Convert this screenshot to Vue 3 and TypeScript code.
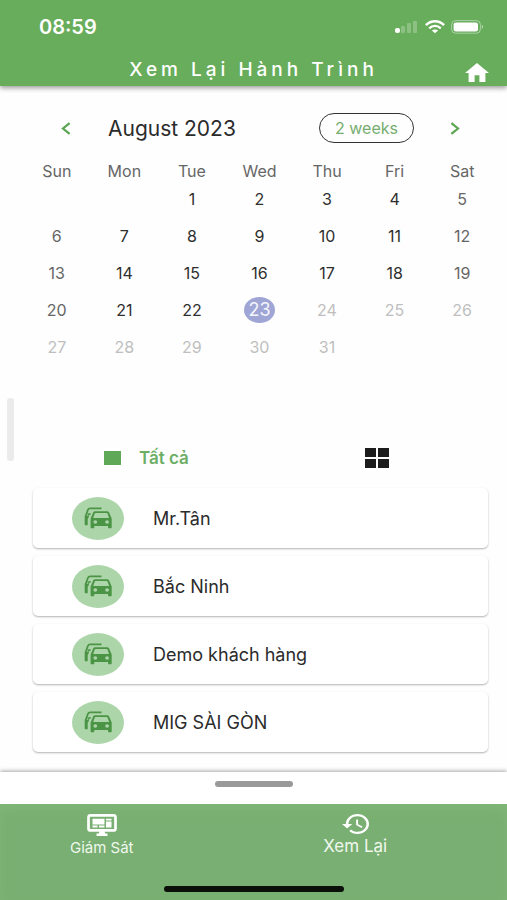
<script setup lang="ts">
import { computed, ref } from 'vue'

interface Day {
  date: number
  weekend: boolean
  disabled: boolean
}

const weekdays: string[] = ['Sun', 'Mon', 'Tue', 'Wed', 'Thu', 'Fri', 'Sat']
const firstWeekday = 2
const daysInMonth = 31
const today = 23
const selected = ref<number>(today)

const weeks = computed<(Day | null)[][]>(() => {
  const rows: (Day | null)[][] = []
  for (let start = 1 - firstWeekday; start <= daysInMonth; start += 7) {
    rows.push(
      Array.from({ length: 7 }, (_, i) => {
        const date = start + i
        if (date < 1 || date > daysInMonth) return null
        return { date, weekend: i === 0 || i === 6, disabled: date > today }
      }),
    )
  }
  return rows
})

const groups: string[] = ['Mr.Tân', 'Bắc Ninh', 'Demo khách hàng', 'MIG SÀI GÒN']
</script>

<template>
  <div class="screen">
    <header class="app-bar">
      <div class="status">
        <span class="clock">08:59</span>
        <div class="indicators">
          <svg width="24" height="14" viewBox="0 0 24 14" aria-hidden="true">
            <rect x="0" y="8" width="5" height="5" rx="2" fill="#fff" />
            <g fill="#fff" opacity="0.25">
              <rect x="6" y="6" width="4" height="7" rx="1" />
              <rect x="12" y="3" width="4" height="10" rx="1" />
              <rect x="18" y="1" width="4" height="12" rx="1" />
            </g>
          </svg>
          <svg width="20" height="14" viewBox="0 0 20 14" fill="none" stroke="#fff" aria-hidden="true">
            <path d="M.9 5.2C6-.1 14-.1 19.1 5.2" stroke-width="2.4" />
            <path d="M4.2 8.3c3.3-3.2 8.3-3.2 11.6 0" stroke-width="2.3" />
            <path d="M10 13.3 6.9 10.6c1.8-1.5 4.4-1.5 6.2 0z" fill="#fff" stroke="none" />
          </svg>
          <svg width="33" height="14" viewBox="0 0 33 14" aria-hidden="true">
            <rect x=".6" y=".6" width="28.8" height="12.6" rx="4" fill="none" stroke="#fff" stroke-opacity=".45" />
            <rect x="2.6" y="2.4" width="24.4" height="9" rx="2.2" fill="#fff" />
            <path d="M30.8 4.8c1.8.7 1.8 3.5 0 4.2z" fill="#fff" fill-opacity=".5" />
          </svg>
        </div>
      </div>
      <div class="title-row">
        <h1 class="title">Xem Lại Hành Trình</h1>
        <button class="icon-button" type="button" aria-label="Home">
          <svg width="24" height="19" viewBox="2 3 20 17" preserveAspectRatio="none" aria-hidden="true">
            <path d="M10 20v-6h4v6h5v-8h3L12 3 2 12h3v8z" fill="#fff" />
          </svg>
        </button>
      </div>
    </header>

    <main class="content">
      <div class="drawer-handle"></div>
      <section class="calendar">
        <div class="calendar-head">
          <button class="chevron" type="button" aria-label="Previous month">
            <svg width="10" height="13" viewBox="0 0 10 13" aria-hidden="true">
              <path d="M8.6 1.2 2 6.5l6.6 5.3" fill="none" stroke="#5aa552" stroke-width="2.2" />
            </svg>
          </button>
          <h2 class="month">August 2023</h2>
          <button class="format" type="button">2 weeks</button>
          <button class="chevron" type="button" aria-label="Next month">
            <svg width="10" height="13" viewBox="0 0 10 13" aria-hidden="true">
              <path d="M1.4 1.2 8 6.5l-6.6 5.3" fill="none" stroke="#5aa552" stroke-width="2.2" />
            </svg>
          </button>
        </div>
        <table class="month-grid">
          <thead>
            <tr>
              <th v-for="name in weekdays" :key="name" scope="col">{{ name }}</th>
            </tr>
          </thead>
          <tbody>
            <tr v-for="(week, w) in weeks" :key="w">
              <td v-for="(day, d) in week" :key="d">
                <button
                  v-if="day"
                  type="button"
                  class="day"
                  :class="{ weekend: day.weekend, disabled: day.disabled, selected: day.date === selected }"
                  :disabled="day.disabled"
                  @click="selected = day.date"
                >{{ day.date }}</button>
              </td>
            </tr>
          </tbody>
        </table>
      </section>

      <div class="filters">
        <button class="filter" type="button">
          <span class="swatch"></span>
          <span>Tất cả</span>
        </button>
        <button class="filter" type="button" aria-label="Grid">
          <svg width="24" height="20" viewBox="0 0 24 20" fill="#1c1c1c" aria-hidden="true">
            <rect width="11" height="9" />
            <rect x="13" width="11" height="9" />
            <rect y="11" width="11" height="9" />
            <rect x="13" y="11" width="11" height="9" />
          </svg>
        </button>
      </div>

      <ul class="groups">
        <li v-for="name in groups" :key="name">
          <button class="group" type="button">
            <span class="avatar">
              <svg width="28" height="22" viewBox="0 0 28 22" fill="#4b9446" aria-hidden="true">
                <path d="M17.500 1.400H6.200C4.700 1.400 4.200 2 3.800 3.100L1.600 9.400" fill="none" stroke="#4b9446" stroke-width="1.700" />
                <path d="M.7 8.800H4l1.200-2V8L4.600 10.600 3.700 12v6.200H1.700c-.6 0-1-.4-1-1zM3.600 6.200h3.200v1.600H3.600z" />
                <path
                  fill-rule="evenodd"
                  d="M25.200 5.700C24.900 4.700 24.100 4.200 23.100 4.200H11.200C10.200 4.200 9.400 4.700 9.100 5.700L6.600 11.600V20.200c0 .6.4 1 1 1h1.700c.6 0 1-.4 1-1V19H24.100v1.200c0 .6.4 1 1 1h1.600c.6 0 1-.4 1-1V11.600zM11.500 5.900h11.300c.4 0 .6.200.7.500L25.100 11H9.200l1.600-4.600C10.900 6.100 11.100 5.900 11.500 5.900zM11.300 16.700a1.900 1.700 0 1 1 0-3.400 1.900 1.700 0 0 1 0 3.400zM23.100 16.700a1.900 1.700 0 1 1 0-3.400 1.900 1.700 0 0 1 0 3.400z"
                />
              </svg>
            </span>
            <span>{{ name }}</span>
          </button>
        </li>
      </ul>
    </main>

    <div class="sheet"><span class="grip"></span></div>

    <nav class="tabs">
      <a class="tab" href="#monitor">
        <svg width="30" height="22" viewBox="0 0 30 22" aria-hidden="true">
          <rect x="1.500" y="1.400" width="27" height="15" rx="2" fill="none" stroke="#fff" stroke-width="2.700" />
          <path d="M12.500 17h5l.7 2.500h2.300V22H9.500v-2.500h2.300z" fill="#fff" />
          <path d="M5.500 4.800h12v5.700h-12zM19 4.800h5.500v1.600H19zM19 7.400h5.500v6.100H19zM5.500 11.600h5v1.900h-5zM12 11.600h5.500v1.900H12z" fill="#fff" />
        </svg>
        <span class="tab-label">Giám Sát</span>
      </a>
      <a class="tab current" href="#replay">
        <svg width="27" height="20" viewBox="1 3 21 18" preserveAspectRatio="none" aria-hidden="true">
          <path
            fill="#fff"
            d="M13 3c-4.970 0-9 4.030-9 9H1l3.890 3.890.07.14L9 12H6c0-3.870 3.130-7 7-7s7 3.130 7 7-3.130 7-7 7c-1.930 0-3.680-.79-4.940-2.060l-1.420 1.420C8.270 19.990 10.510 21 13 21c4.970 0 9-4.030 9-9s-4.030-9-9-9zm-1 5v5l4.280 2.540.72-1.210-3.500-2.080V8z"
          />
        </svg>
        <span class="tab-label">Xem Lại</span>
      </a>
      <span class="home-indicator"></span>
    </nav>
  </div>
</template>

<style>
body {
  margin: 0;
  background: #fff;
}
</style>

<style scoped>
.screen {
  display: flex;
  flex-direction: column;
  min-height: 100vh;
  background: #fefefe;
  color: #2b2b2b;
  font-family: Inter, "Liberation Sans", sans-serif;
  font-size: 16px;
}

button {
  margin: 0;
  padding: 0;
  border: 0;
  background: none;
  color: inherit;
  font: inherit;
  cursor: pointer;
}

svg {
  display: block;
}

.app-bar {
  position: relative;
  height: 86px;
  background: #67ad5b;
  color: #fff;
  box-shadow: 0 2px 5px rgba(0, 0, 0, 0.4);
}

.status {
  display: flex;
  justify-content: space-between;
  align-items: center;
  padding: 16px 23px 0 39px;
  height: 22px;
}

.clock {
  font-size: 20px;
  font-weight: 600;
}

.indicators {
  display: flex;
  align-items: center;
  gap: 6px;
}

.title-row {
  display: grid;
  grid-template-columns: 1fr auto 1fr;
  align-items: center;
  padding: 17px 18px 0;
  height: 28px;
}

.title {
  grid-column: 2;
  margin: 0;
  font-size: 19px;
  font-weight: 500;
  letter-spacing: 4px;
}

.icon-button {
  justify-self: end;
  padding-top: 6px;
}

.content {
  position: relative;
  flex: 1;
}

.drawer-handle {
  position: absolute;
  top: 312px;
  left: 7px;
  width: 7px;
  height: 63px;
  border-radius: 3px;
  background: #ebebeb;
}

.calendar {
  padding: 27px 11px 0 23px;
}

.calendar-head {
  display: flex;
  align-items: center;
  height: 30px;
  padding: 0 36px 0 38px;
}

.month {
  flex: 1;
  margin: 0 0 0 37px;
  font-size: 21px;
  font-weight: 400;
}

.format {
  box-sizing: border-box;
  height: 30px;
  margin-right: 36px;
  padding: 0 15px;
  border: 1px solid #333;
  border-radius: 15px;
  color: #76ad70;
  font-size: 16px;
}

.month-grid {
  width: 100%;
  margin-top: 19px;
  table-layout: fixed;
  border-collapse: collapse;
}

.month-grid th {
  height: 18px;
  padding: 0;
  color: #666;
  font-size: 16px;
  font-weight: 400;
  line-height: 18px;
}

.month-grid td {
  height: 37px;
  padding: 0;
  line-height: 18px;
  text-align: center;
}

.day {
  width: 31px;
  height: 26px;
  border-radius: 50%;
  color: #2e2e2e;
  font-size: 16px;
}

.day.weekend {
  color: #666;
}

.day.disabled {
  color: #bfbfbf;
}

.day.selected {
  background: #9fa5d5;
  color: #f5f5fc;
  font-size: 18px;
}

.filters {
  display: grid;
  grid-template-columns: 261px 1fr;
  align-items: center;
  height: 24px;
  margin-top: 81px;
  padding-left: 104px;
}

.filter {
  display: flex;
  align-items: center;
  gap: 18px;
  color: #6dae66;
  font-size: 17px;
  font-weight: 600;
}

.swatch {
  width: 17px;
  height: 14px;
  background: #5fa857;
}

.groups {
  display: flex;
  flex-direction: column;
  gap: 8px;
  margin: 0;
  padding: 18px 19px 19px 33px;
  list-style: none;
}

.group {
  display: flex;
  align-items: center;
  gap: 29px;
  width: 100%;
  height: 60px;
  padding: 0 39px;
  border-radius: 5px;
  background: #fff;
  box-shadow: 0 1px 2px rgba(0, 0, 0, 0.3);
  font-size: 18px;
  text-align: left;
}

.avatar {
  display: grid;
  place-items: center;
  width: 52px;
  height: 43px;
  border-radius: 50%;
  background: #acd5a9;
}

.sheet {
  display: flex;
  justify-content: center;
  height: 23px;
  padding-top: 9px;
  background: #fff;
  box-shadow: 0 -1px 4px rgba(0, 0, 0, 0.35);
}

.grip {
  width: 78px;
  height: 6px;
  border-radius: 3px;
  background: #999;
}

.tabs {
  position: relative;
  display: grid;
  grid-template-columns: 1fr 1fr;
  height: 96px;
  background: #79af72;
  box-shadow: inset 0 6px 12px #7fb777;
}

.tab {
  display: flex;
  flex-direction: column;
  align-items: center;
  gap: 3px;
  padding: 10px 50px 0 0;
  color: #f0f8ee;
  font-size: 15px;
  text-decoration: none;
}

.tab.current {
  font-size: 17px;
}

.tab-label {
  line-height: 18px;
}

.home-indicator {
  position: absolute;
  bottom: 8px;
  left: 50%;
  width: 180px;
  height: 6px;
  margin-left: -90px;
  border-radius: 3px;
  background: #0b0f0a;
}
</style>
